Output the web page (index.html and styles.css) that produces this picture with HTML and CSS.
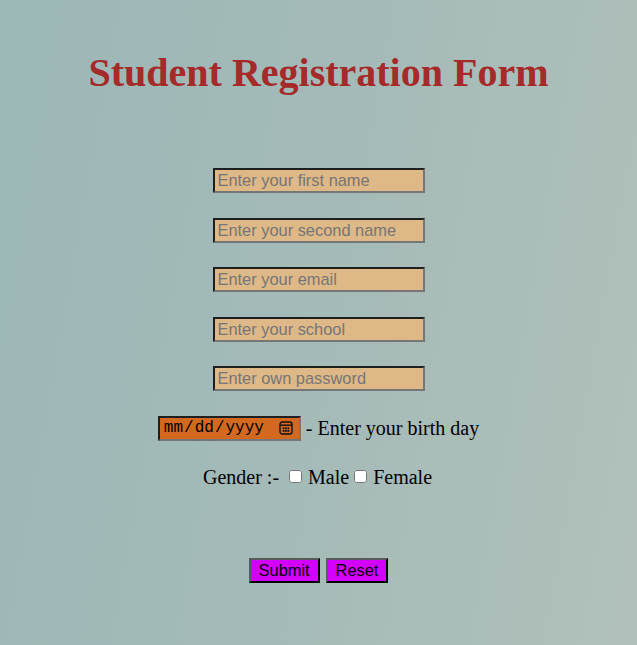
FILE: index.html
```html
<!DOCTYPE html>
<html lang="en">
<head>
<meta charset="utf-8">
<title>Student Registration Form</title>
<link rel="stylesheet" href="styles.css">
</head>
<body>
<h1 class="title">Student Registration Form</h1>
<form class="form">
  <input class="field" type="text" placeholder="Enter your first name">
  <input class="field" type="text" placeholder="Enter your second name">
  <input class="field" type="email" placeholder="Enter your email">
  <input class="field" type="text" placeholder="Enter your school">
  <input class="field" type="password" placeholder="Enter own password">
  <div class="row birth">
    <input class="date" type="date">
    <span>- Enter your birth day</span>
  </div>
  <div class="gender">Gender :-&nbsp; <label class="opt"><input class="check" type="checkbox"> Male</label> <label class="opt"><input class="check" type="checkbox"> Female</label></div>
  <div class="actions">
    <button class="btn" type="submit">Submit</button>
    <button class="btn" type="reset">Reset</button>
  </div>
</form>
</body>
</html>
```
FILE: styles.css
```css
html, body {
  height: 100%;
}
body {
  margin: 0;
  background: linear-gradient(100deg, #9bb7b6 0%, #a3bab8 45%, #b1c0ba 100%);
  font-family: "Liberation Serif", "Times New Roman", serif;
  font-size: 20px;
  color: #000;
}
.title {
  margin: 0;
  padding-top: 50px;
  text-align: center;
  font-size: 40px;
  font-weight: bold;
  color: #a52a2a;
  line-height: 46px;
}
.form {
  display: flex;
  flex-direction: column;
  align-items: center;
  gap: 24.5px;
  margin-top: 72px;
}
.field {
  box-sizing: border-box;
  width: 212px;
  height: 25px;
  margin: 0;
  padding: 1px 3px;
  border: 2px solid;
  border-color: #1f1f1f #767676 #767676 #1f1f1f;
  background: #deb887;
  font-family: "Liberation Sans", Arial, sans-serif;
  font-size: 16.4px;
  color: #000;
  outline: none;
}
.field::placeholder {
  color: #767676;
}
.row {
  display: flex;
  align-items: center;
}
.birth {
  gap: 5px;
}
.date {
  box-sizing: border-box;
  width: 143px;
  height: 25px;
  margin: 0;
  padding: 1px 3px;
  border: 2px solid;
  border-color: #1f1f1f #767676 #767676 #1f1f1f;
  background: #d2691e;
  font-family: "Liberation Mono", "DejaVu Sans Mono", monospace;
  font-size: 16px;
  color: #000;
}
.date::-webkit-calendar-picker-indicator {
  width: 14px;
  height: 14px;
  padding: 0;
  margin: 0 3px 0 0;
  background: url("data:image/svg+xml,%3Csvg xmlns='http://www.w3.org/2000/svg' viewBox='0 0 14 14'%3E%3Crect x='1' y='1' width='12' height='12' rx='2.2' fill='none' stroke='%23111' stroke-width='1.4'/%3E%3Cline x1='1' y1='4.2' x2='13' y2='4.2' stroke='%23111' stroke-width='1.4'/%3E%3Crect x='3.7' y='6.4' width='1.8' height='1.8' fill='%23111'/%3E%3Crect x='6.1' y='6.4' width='1.8' height='1.8' fill='%23111'/%3E%3Crect x='8.5' y='6.4' width='1.8' height='1.8' fill='%23111'/%3E%3Crect x='3.7' y='9' width='1.8' height='1.8' fill='%23111'/%3E%3Crect x='6.1' y='9' width='1.8' height='1.8' fill='%23111'/%3E%3Crect x='8.5' y='9' width='1.8' height='1.8' fill='%23111'/%3E%3C/svg%3E") no-repeat center / 14px 14px;
}
.gender {
  margin-top: 1px;
  margin-left: -2px;
  line-height: 23px;
}
.check {
  margin: 0 1px 0 0;
  width: 13px;
  height: 13px;
  vertical-align: 1px;
}
.actions {
  display: flex;
  gap: 6px;
  margin-top: 44px;
}
.btn {
  box-sizing: border-box;
  height: 25px;
  margin: 0;
  padding: 0 8px;
  border: 2px solid;
  border-color: #5a5a5a #000 #000 #5a5a5a;
  background: #d400ff;
  font-family: "Liberation Sans", Arial, sans-serif;
  font-size: 16.4px;
  color: #000;
}
```
